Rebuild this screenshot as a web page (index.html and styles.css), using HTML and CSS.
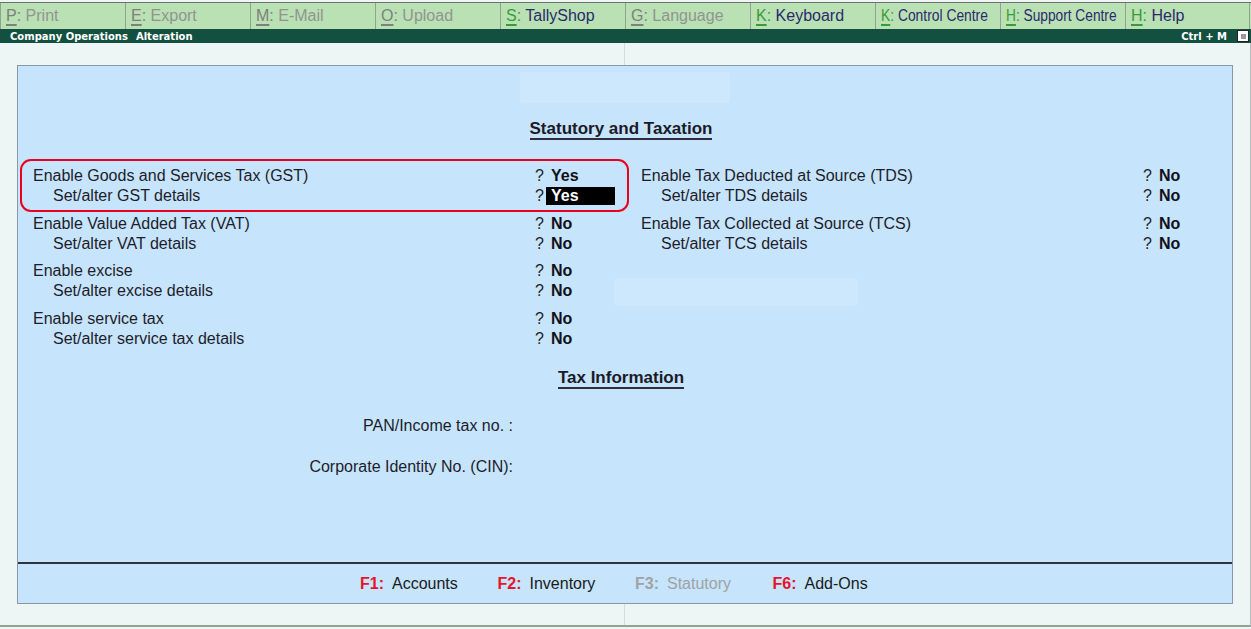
FILE: index.html
```html
<!DOCTYPE html>
<html>
<head>
<meta charset="utf-8">
<link rel="stylesheet" href="styles.css">
</head>
<body>
<div class="toolbar">
  <div class="tb-btn off"><span class="k"><span class="key">P</span>:</span> Print</div>
  <div class="tb-btn off"><span class="k"><span class="key">E</span>:</span> Export</div>
  <div class="tb-btn off"><span class="k"><span class="key">M</span>:</span> E-Mail</div>
  <div class="tb-btn off"><span class="k"><span class="key">O</span>:</span> Upload</div>
  <div class="tb-btn"><span class="k"><span class="key">S</span>:</span> TallyShop</div>
  <div class="tb-btn off"><span class="k"><span class="key">G</span>:</span> Language</div>
  <div class="tb-btn"><span class="k"><span class="key">K</span>:</span> Keyboard</div>
  <div class="tb-btn"><span class="squeeze"><span class="k"><span class="key">K</span>:</span> Control Centre</span></div>
  <div class="tb-btn"><span class="squeeze s2"><span class="k"><span class="key">H</span>:</span> Support Centre</span></div>
  <div class="tb-btn last"><span class="k"><span class="key">H</span>:</span> Help</div>
</div>
<div class="titlebar">
  <span>Company Operations</span>
  <span>Alteration</span>
  <span class="spacer"></span>
  <span>Ctrl + M</span>
  <span class="minbox"><span></span></span>
</div>
<div class="workspace">
  <div class="panel">
    <div class="ghost g1"></div>
    <div class="ghost g2"></div>
    <div class="panel-main">
      <div class="section-title"><span>Statutory and Taxation</span></div>
      <div class="cols">
        <div class="col">
          <div class="group">
            <div class="row"><span class="label">Enable Goods and Services Tax (GST)</span><span class="q">?</span><span class="val">Yes</span></div>
            <div class="row sub"><span class="label">Set/alter GST details</span><span class="q">?</span><span class="val sel">Yes</span></div>
          </div>
          <div class="group">
            <div class="row"><span class="label">Enable Value Added Tax (VAT)</span><span class="q">?</span><span class="val">No</span></div>
            <div class="row sub"><span class="label">Set/alter VAT details</span><span class="q">?</span><span class="val">No</span></div>
          </div>
          <div class="group">
            <div class="row"><span class="label">Enable excise</span><span class="q">?</span><span class="val">No</span></div>
            <div class="row sub"><span class="label">Set/alter excise details</span><span class="q">?</span><span class="val">No</span></div>
          </div>
          <div class="group">
            <div class="row"><span class="label">Enable service tax</span><span class="q">?</span><span class="val">No</span></div>
            <div class="row sub"><span class="label">Set/alter service tax details</span><span class="q">?</span><span class="val">No</span></div>
          </div>
        </div>
        <div class="col">
          <div class="group">
            <div class="row"><span class="label">Enable Tax Deducted at Source (TDS)</span><span class="q">?</span><span class="val">No</span></div>
            <div class="row sub"><span class="label">Set/alter TDS details</span><span class="q">?</span><span class="val">No</span></div>
          </div>
          <div class="group">
            <div class="row"><span class="label">Enable Tax Collected at Source (TCS)</span><span class="q">?</span><span class="val">No</span></div>
            <div class="row sub"><span class="label">Set/alter TCS details</span><span class="q">?</span><span class="val">No</span></div>
          </div>
        </div>
      </div>
      <div class="section-title tax"><span>Tax Information</span></div>
      <div class="info-row first"><span class="info-label">PAN/Income tax no. :</span></div>
      <div class="info-row"><span class="info-label">Corporate Identity No. (CIN):</span></div>
    </div>
    <div class="panel-foot">
      <div class="fitem"><span class="fkey">F1:</span>Accounts</div>
      <div class="fitem"><span class="fkey">F2:</span>Inventory</div>
      <div class="fitem off"><span class="fkey">F3:</span>Statutory</div>
      <div class="fitem"><span class="fkey">F6:</span>Add-Ons</div>
    </div>
    <div class="highlight"></div>
  </div>
</div>
</body>
</html>
```
FILE: styles.css
```css
html, body {
  margin: 0;
  padding: 0;
}
body {
  width: 1251px;
  height: 629px;
  overflow: hidden;
  background: #eef5f5;
  font-family: "Liberation Sans", Arial, sans-serif;
  color: #1d1d2b;
}

/* top toolbar */
.toolbar {
  display: flex;
  margin-top: 2px;
  border-top: 1px solid #6f726f;
  height: 26px;
  background: #b9e1b3;
}
.tb-btn {
  width: 125px;
  box-sizing: border-box;
  border-left: 1px solid #8fa38f;
  padding-left: 5px;
  font-size: 16px;
  line-height: 26px;
  color: #2b2a6e;
  white-space: nowrap;
  overflow: hidden;
}
.tb-btn.last {
  border-right: 1px solid #8fa38f;
}
.tb-btn .k {
  color: #3a9b3a;
}
.tb-btn .key {
  text-decoration: underline;
  text-decoration-thickness: 2px;
  text-underline-offset: 3px;
}
.tb-btn.off {
  color: #929492;
}
.tb-btn.off .k {
  color: #7d807d;
}
.squeeze {
  display: inline-block;
  transform: scaleX(0.865);
  transform-origin: left center;
}
.squeeze.s2 {
  transform: scaleX(0.857);
}

/* title bar */
.titlebar {
  height: 14px;
  background: #13503f;
  color: #ffffff;
  font: bold 10px "DejaVu Sans", Verdana, sans-serif;
  display: flex;
  align-items: center;
  gap: 8px;
  padding-left: 10px;
  padding-right: 2px;
}
.titlebar .spacer {
  flex: 1;
}
.minbox {
  margin-left: 2px;
  width: 12px;
  height: 12px;
  box-sizing: border-box;
  background: #ffffff;
  border: 1px solid #222222;
  display: flex;
  align-items: center;
  justify-content: center;
}
.minbox span {
  width: 5px;
  height: 5px;
  background: #9a9a9a;
}

/* workspace */
.workspace {
  height: 584px;
  box-sizing: border-box;
  padding: 22px 17px 0 17px;
  border-bottom: 2px solid #93a293;
  border-right: 1px solid #b4bcbc;
  background:
    linear-gradient(to right, transparent 624px, #d6dcdc 624px, #d6dcdc 625px, transparent 625px),
    #eef5f5;
}
.panel {
  position: relative;
  height: 539px;
  box-sizing: border-box;
  border: 1px solid #8a97a4;
  background: #c6e4fc;
  display: flex;
  flex-direction: column;
  font-size: 16px;
}
.panel-main {
  flex: 1;
  padding-top: 54px;
}
.section-title {
  text-align: center;
  padding-right: 8px;
}
.section-title span {
  display: inline-block;
  font-size: 17px;
  font-weight: bold;
  line-height: 18px;
  border-bottom: 2px solid #2e2e3a;
  color: #1b1b28;
}
.section-title.tax {
  margin-top: 20.5px;
}
.cols {
  display: grid;
  grid-template-columns: 608px 1fr;
  margin-top: 26px;
  padding-left: 15px;
}
.group + .group {
  margin-top: 7.5px;
}
.row {
  display: flex;
  height: 20px;
  line-height: 20px;
  white-space: nowrap;
}
.label {
  width: 502px;
  box-sizing: border-box;
}
.row.sub .label {
  padding-left: 20px;
}
.q {
  width: 16px;
}
.val {
  font-weight: bold;
  color: #111118;
}
.val.sel {
  background: #000000;
  color: #ffffff;
  margin-left: -5px;
  padding-left: 5px;
  width: 69px;
  box-sizing: border-box;
  height: 18px;
  line-height: 18px;
  margin-top: 1px;
}
.info-row {
  padding-left: 15px;
  line-height: 20px;
  margin-top: 21px;
}
.info-row.first {
  margin-top: 27px;
}
.info-label {
  display: inline-block;
  width: 480px;
  text-align: right;
}

/* footer */
.panel-foot {
  height: 39px;
  border-top: 2px solid #2f3540;
  display: flex;
  align-items: center;
  padding-left: 342px;
  color: #1a1a1a;
}
.fitem {
  width: 137.5px;
  white-space: nowrap;
}
.fkey {
  font-weight: bold;
  color: #e6132b;
  margin-right: 8px;
}
.fitem.off,
.fitem.off .fkey {
  color: #a0a2a4;
}

/* overlays */
.highlight {
  position: absolute;
  left: 2px;
  top: 93px;
  width: 609px;
  height: 53px;
  box-sizing: border-box;
  border: 2px solid #e8001c;
  border-radius: 11px;
}
.ghost {
  position: absolute;
  background: #cde8fd;
  border-radius: 2px;
}
.ghost.g1 {
  left: 502px;
  top: 6px;
  width: 210px;
  height: 31px;
}
.ghost.g2 {
  left: 596px;
  top: 212px;
  width: 244px;
  height: 28px;
}
```
